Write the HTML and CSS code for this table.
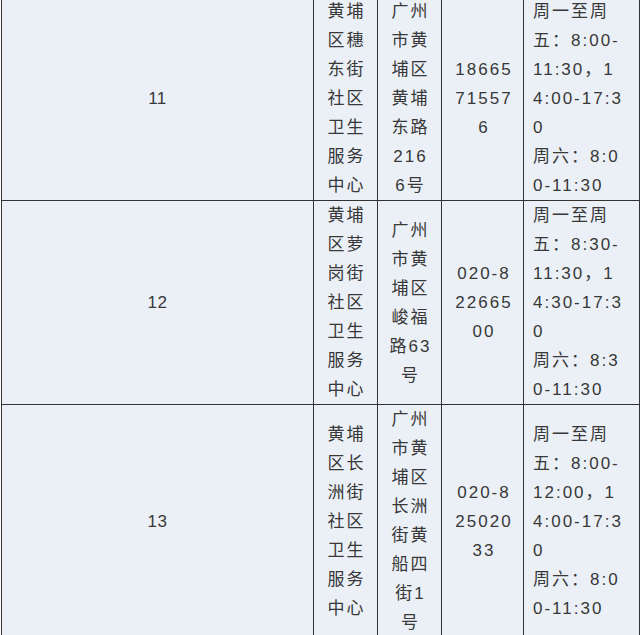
FILE: index.html
```html
<!DOCTYPE html>
<html lang="zh-CN">
<head>
<meta charset="utf-8">
<title>社区卫生服务中心</title>
<link rel="stylesheet" href="styles.css">
</head>
<body>
<table class="grid">
  <colgroup>
    <col class="c-no">
    <col class="c-name">
    <col class="c-addr">
    <col class="c-tel">
    <col class="c-time">
  </colgroup>
  <tbody>
    <tr>
      <td class="no">11</td>
      <td class="name">黄埔区穗东街社区卫生服务中心</td>
      <td class="addr">广州市黄埔区黄埔东路2166号</td>
      <td class="tel">18665715576</td>
      <td class="time">周一至周五：8:00-11:30，14:00-17:30<br>周六：8:00-11:30</td>
    </tr>
    <tr>
      <td class="no">12</td>
      <td class="name">黄埔区萝岗街社区卫生服务中心</td>
      <td class="addr">广州市黄埔区峻福路63号</td>
      <td class="tel">020-82266500</td>
      <td class="time">周一至周五：8:30-11:30，14:30-17:30<br>周六：8:30-11:30</td>
    </tr>
    <tr>
      <td class="no">13</td>
      <td class="name">黄埔区长洲街社区卫生服务中心</td>
      <td class="addr">广州市黄埔区长洲街黄船四街1号</td>
      <td class="tel">020-82502033</td>
      <td class="time">周一至周五：8:00-12:00，14:00-17:30<br>周六：8:00-11:30</td>
    </tr>
  </tbody>
</table>
</body>
</html>
```
FILE: styles.css
```css
html, body {
  margin: 0;
  padding: 0;
  background: #ffffff;
}

.grid {
  border-collapse: collapse;
  table-layout: fixed;
  width: 638px;
  margin: -4px 0 0 1px;
  background: #ebf0f7;
  font-family: "Liberation Sans", "Noto Sans CJK SC", sans-serif;
  font-size: 17px;
  line-height: 29px;
  letter-spacing: 2px;
  color: #383838;
}

.c-no { width: 312px; }
.c-name { width: 64px; }
.c-addr { width: 64px; }
.c-tel { width: 82px; }
.c-time { width: 116px; }

.grid td {
  border: 1px solid #333333;
  padding: 0;
  vertical-align: middle;
  text-align: center;
  word-break: break-all;
}

.grid td.no {
  letter-spacing: 0.5px;
}

.grid td.name,
.grid td.addr {
  padding: 0 9px 0 11px;
}

.grid td.tel {
  padding: 0 9px 0 12px;
}

.grid td.time {
  text-align: left;
  padding: 0 14px 0 9px;
}
```
